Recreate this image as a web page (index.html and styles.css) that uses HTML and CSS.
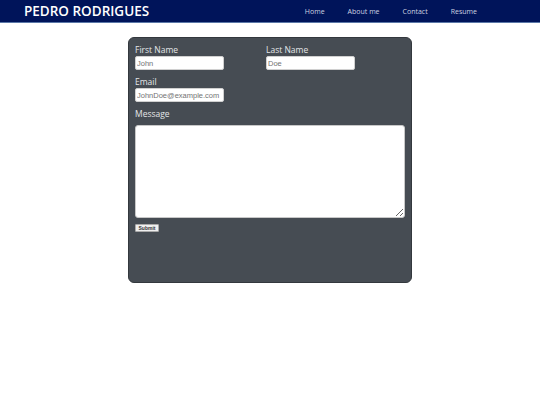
FILE: index.html
```html
<!DOCTYPE html>
<html>
<head>
<meta charset="utf-8">
<link rel="stylesheet" href="styles.css">
</head>
<body>
<header class="topbar">
  <div class="brand">PEDRO RODRIGUES</div>
  <nav class="nav">
    <a href="#">Home</a>
    <a href="#">About me</a>
    <a href="#">Contact</a>
    <a href="#">Resume</a>
  </nav>
</header>
<main class="page">
  <form class="card">
    <div class="row">
      <div class="field">
        <label>First Name</label>
        <input type="text" placeholder="John">
      </div>
      <div class="field">
        <label>Last Name</label>
        <input type="text" placeholder="Doe">
      </div>
    </div>
    <div class="field">
      <label>Email</label>
      <input type="text" placeholder="JohnDoe@example.com">
    </div>
    <div class="field">
      <label>Message</label>
      <textarea></textarea>
    </div>
    <div class="actions"><button type="button" class="submit">Submit</button></div>
  </form>
</main>
</body>
</html>
```

FILE: styles.css
```css
html, body {
  margin: 0;
  padding: 0;
  background: #ffffff;
}
body {
  font-family: "Open Sans", "Liberation Sans", sans-serif;
}
.topbar {
  height: 22px;
  background: #00145a;
  border-bottom: 1px solid #5b78a8;
  display: flex;
  align-items: center;
  justify-content: space-between;
  padding: 0 63px 0 24px;
}
.brand {
  color: #ffffff;
  font-size: 13.5px;
  font-weight: 600;
}
.nav {
  display: flex;
  gap: 23px;
}
.nav a {
  color: #cdd2e0;
  font-size: 7px;
  text-decoration: none;
}
.page {
  display: flex;
  justify-content: center;
  padding-top: 14px;
}
.card {
  width: 270px;
  height: 238px;
  background: #464c53;
  border: 1px solid #33383d;
  border-radius: 6px;
  padding: 6px 6px 0 6px;
  display: flex;
  flex-direction: column;
}
.row {
  display: flex;
  gap: 42px;
}
.field {
  display: flex;
  flex-direction: column;
}
.field label {
  color: #e4e6e8;
  font-size: 8.5px;
  font-weight: 400;
  line-height: 12px;
  height: 12px;
}
.field input {
  width: 89px;
  height: 14px;
  box-sizing: border-box;
  border: 1px solid #d0d0d0;
  border-radius: 2px;
  padding: 0 1px;
  font-family: "Liberation Sans", Arial, sans-serif;
  font-size: 7.5px;
  margin: 0 0 6px 0;
  background: #fff;
}
.field input::placeholder {
  color: #737373;
  opacity: 1;
}
.field textarea {
  width: 270px;
  height: 93px;
  box-sizing: border-box;
  margin: 5px 0 0 0;
  border: 1px solid #c8c8c8;
  border-radius: 3px;
  background: #fff;
}
.actions {
  display: flex;
  margin-top: 6px;
}
.submit {
  font-family: "Liberation Sans", Arial, sans-serif;
  font-size: 5px;
  font-weight: bold;
  color: #333;
  background: #efefef;
  border: 1px solid #aaa;
  border-radius: 1px;
  padding: 0 2px;
  width: 24px;
  height: 8px;
  line-height: 6px;
}
```
